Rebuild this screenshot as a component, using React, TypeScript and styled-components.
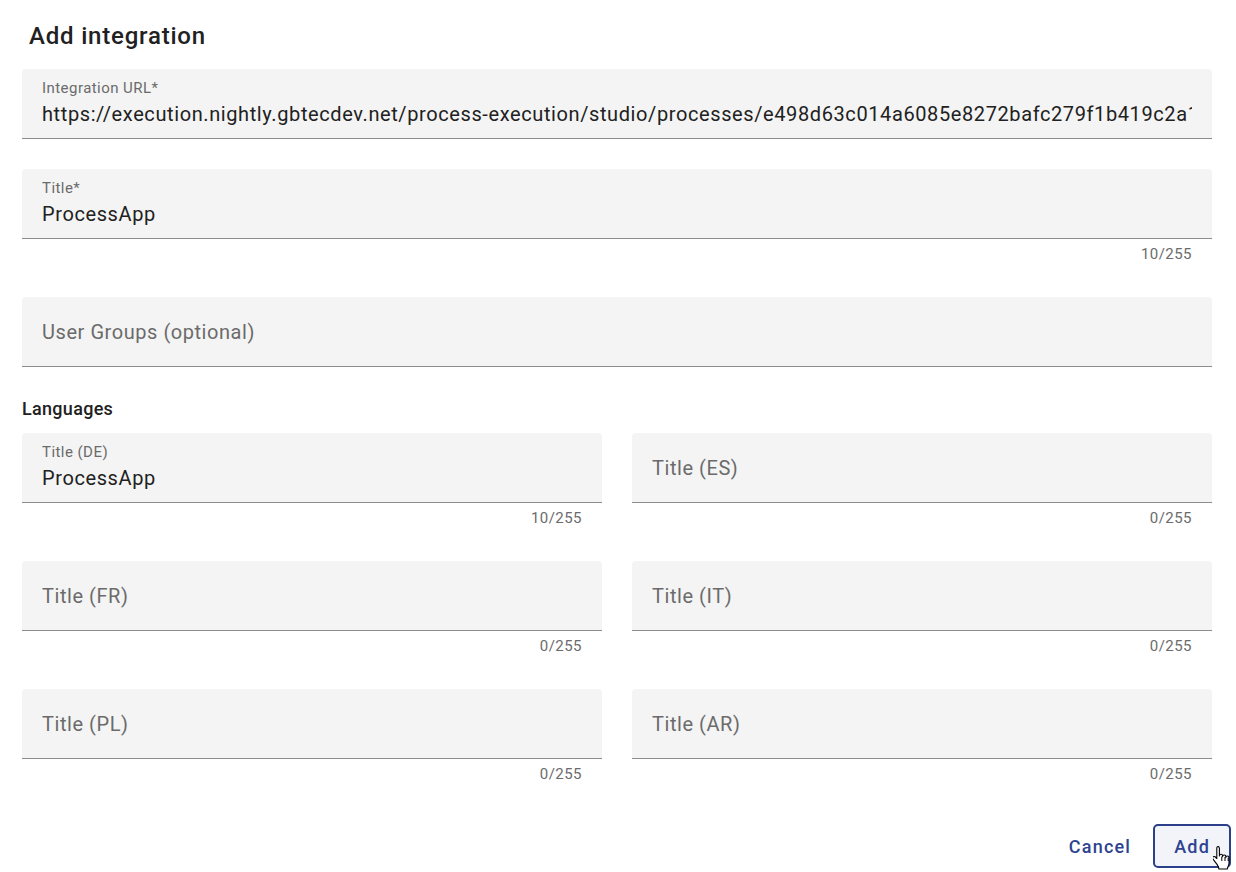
import React from 'react';
import { createGlobalStyle, styled } from 'styled-components';

const GlobalStyle = createGlobalStyle`
  html, body {
    margin: 0;
    padding: 0;
    background: #fff;
  }
  body {
    font-family: Roboto, 'Liberation Sans', sans-serif;
    color: #212121;
  }
`;

interface FieldProps {
  label: string;
  value?: string;
  counter?: string;
}

const TextField: React.FC<FieldProps> = ({ label, value, counter }) => {
  return (
    <FieldGroup>
      <FieldBox $filled={!!value}>
        {value ? (
          <>
            <FloatLabel>{label}</FloatLabel>
            <Value>{value}</Value>
          </>
        ) : (
          <Placeholder>{label}</Placeholder>
        )}
      </FieldBox>
      {counter && <Counter>{counter}</Counter>}
    </FieldGroup>
  );
};

const HandCursor = () => (
  <Cursor width="18" height="26" viewBox="0 0 18 26">
    <path
      d="M5.5 1.5c-1 0-1.7.7-1.7 1.7v10.3l-1.4-1.5c-.7-.7-1.8-.7-2.4 0-.5.6-.5 1.5 0 2.1l4 5.3c.9 1.3 1.9 2.6 1.9 4.6h8.4c0-1.6 1.7-3.2 1.7-5.8v-5.6c0-.9-.7-1.6-1.6-1.6-.9 0-1.6.7-1.6 1.6v-1c0-.9-.7-1.6-1.6-1.6-.9 0-1.6.7-1.6 1.6v-.7c0-.9-.7-1.6-1.6-1.6-.9 0-1.6.7-1.6 1.6V3.2c0-1-.7-1.7-1.7-1.7z"
      fill="#fff"
      stroke="#000"
      strokeWidth="1.1"
      strokeLinejoin="round"
    />
    <path d="M8.8 11.5v4.5M12 12v4M15.2 12.6v3.4" stroke="#000" strokeWidth="1" />
  </Cursor>
);

const App: React.FC = () => {
  return (
    <Page>
      <GlobalStyle />
      <Heading>Add integration</Heading>
      <Form>
        <TextField
          label="Integration URL*"
          value="https://execution.nightly.gbtecdev.net/process-execution/studio/processes/e498d63c014a6085e8272bafc279f1b419c2a1f0"
        />
        <TextField label="Title*" value="ProcessApp" counter="10/255" />
        <TextField label="User Groups (optional)" />
        <SectionLabel>Languages</SectionLabel>
        <LangGrid>
          <TextField label="Title (DE)" value="ProcessApp" counter="10/255" />
          <TextField label="Title (ES)" counter="0/255" />
          <TextField label="Title (FR)" counter="0/255" />
          <TextField label="Title (IT)" counter="0/255" />
          <TextField label="Title (PL)" counter="0/255" />
          <TextField label="Title (AR)" counter="0/255" />
        </LangGrid>
      </Form>
      <Actions>
        <TextButton>Cancel</TextButton>
        <OutlineButton>
          Add
          <HandCursor />
        </OutlineButton>
      </Actions>
    </Page>
  );
};

const Page = styled.div`
  width: 1236px;
  height: 872px;
  box-sizing: border-box;
  padding: 20px 5px 0 22px;
  overflow: hidden;
`;

const Heading = styled.h1`
  margin: 0 0 17px 7px;
  font-size: 24px;
  line-height: 32px;
  font-weight: 500;
  letter-spacing: 0.8px;
  color: #212121;
`;

const Form = styled.div`
  display: flex;
  flex-direction: column;
  gap: 30px;
  margin-right: 19px;
`;

const FieldGroup = styled.div`
  display: flex;
  flex-direction: column;
  min-width: 0;
`;

const FieldBox = styled.div<{ $filled: boolean }>`
  height: 70px;
  box-sizing: border-box;
  background: #f4f4f4;
  border-radius: 4px 4px 0 0;
  border-bottom: 1px solid #8c8c8c;
  padding: ${(p) => (p.$filled ? '9px 20px 0' : '0 20px')};
  display: flex;
  flex-direction: column;
  justify-content: ${(p) => (p.$filled ? 'flex-start' : 'center')};
  overflow: hidden;
`;

const FloatLabel = styled.div`
  font-size: 15px;
  line-height: 20px;
  color: #6b6b6b;
  letter-spacing: 0.45px;
`;

const Value = styled.div`
  margin-top: 3px;
  font-size: 20px;
  line-height: 26px;
  color: #212121;
  letter-spacing: 0.6px;
  white-space: nowrap;
  overflow: hidden;
`;

const Placeholder = styled.div`
  font-size: 20px;
  line-height: 26px;
  color: #6b6b6b;
  letter-spacing: 0.55px;
  margin-top: 1px;
`;

const Counter = styled.div`
  height: 28px;
  box-sizing: border-box;
  padding: 6px 20px 0 0;
  text-align: right;
  font-size: 15px;
  line-height: 18px;
  color: #6b6b6b;
  letter-spacing: 0.45px;
`;

const SectionLabel = styled.div`
  font-size: 18px;
  line-height: 24px;
  font-weight: 500;
  letter-spacing: 0.3px;
  color: #212121;
  margin: 0 0 -18px;
`;

const LangGrid = styled.div`
  display: grid;
  grid-template-columns: 1fr 1fr;
  column-gap: 30px;
  row-gap: 30px;
`;

const Actions = styled.div`
  display: flex;
  justify-content: flex-end;
  align-items: center;
  gap: 2px;
  margin-top: 37px;
`;

const TextButton = styled.button`
  height: 44px;
  padding: 0 20px;
  background: transparent;
  border: none;
  font-family: Roboto, 'Liberation Sans', sans-serif;
  font-size: 18px;
  font-weight: 500;
  letter-spacing: 1.2px;
  color: #2d4391;
`;

const OutlineButton = styled.button`
  position: relative;
  height: 44px;
  padding: 0 19px;
  background: #f3f4f9;
  border: 2px solid #2b3f8b;
  border-radius: 5px;
  font-family: Roboto, 'Liberation Sans', sans-serif;
  font-size: 18px;
  font-weight: 500;
  letter-spacing: 1.2px;
  color: #2d4391;
`;

const Cursor = styled.svg`
  position: absolute;
  left: 58px;
  top: 19px;
`;

export default App;
